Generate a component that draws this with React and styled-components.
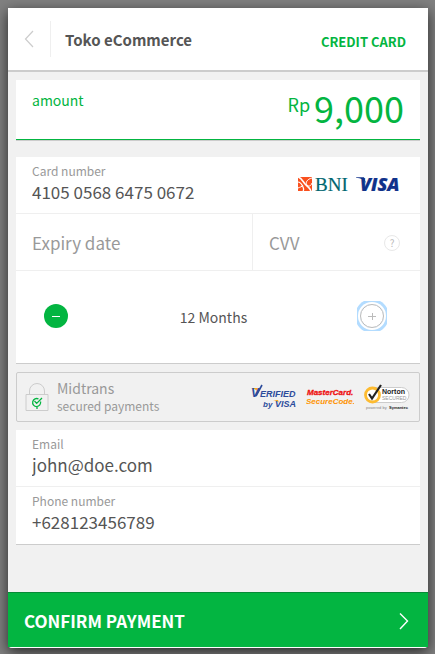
import React, { useState } from "react";
import styled, { createGlobalStyle, css } from "styled-components";

const green = "#03b541";
const line = "#cccccc";
const hairline = "#efefef";

const GlobalStyle = createGlobalStyle`
  * { box-sizing: border-box; }
  body {
    margin: 0;
    background: #808080;
    color: #555555;
    font-family: "Noto Sans CJK SC", "Noto Sans", sans-serif;
  }
  button, input { font: inherit; color: inherit; }
  button { padding: 0; border: 0; background: none; cursor: pointer; }
`;

const Page = styled.div`
  display: flex;
  min-height: 100vh;
  padding: 8px 7px 6px 8px;
`;

const Dialog = styled.form`
  display: flex;
  flex: 1;
  flex-direction: column;
  min-width: 0;
  background: #f1f1f1;
  border-bottom: 1px solid #ffffff;
  border-radius: 0 0 4px 4px;
  box-shadow: 0 4px 14px rgba(0, 0, 0, 0.7);
`;

const Header = styled.header`
  display: flex;
  align-items: center;
  height: 64px;
  padding-right: 22px;
  background: #ffffff;
  border-bottom: 2px solid ${line};
`;

const BackButton = styled.button`
  display: flex;
  align-items: center;
  justify-content: center;
  width: 43px;
  height: 36px;
  border-right: 1px solid ${hairline};
`;

const Title = styled.h1`
  flex: 1;
  margin: 0;
  padding: 2px 0 0 14px;
  font-size: 15px;
  line-height: 24px;
  font-weight: 700;
`;

const Method = styled.span`
  padding-top: 6px;
  color: ${green};
  font-size: 13px;
  line-height: 20px;
  font-weight: 700;
`;

const Content = styled.main`
  display: flex;
  flex: 1;
  flex-direction: column;
  padding: 8px 8px 47px;
`;

const Panel = styled.section`
  background: #ffffff;
  border-bottom: 1px solid ${line};
`;

const AmountPanel = styled(Panel)`
  display: flex;
  justify-content: space-between;
  height: 61px;
  margin-bottom: 16px;
  padding: 0 16px;
  box-shadow: inset 0 -1px 0 ${green};
  color: ${green};
`;

const AmountLabel = styled.span`
  padding-top: 10px;
  font-size: 14px;
  line-height: 20px;
`;

const Amount = styled.span`
  display: flex;
  gap: 4px;
`;

const Currency = styled.span`
  padding-top: 12px;
  font-size: 18px;
  line-height: 24px;
`;

const Total = styled.span`
  padding-top: 7px;
  font-size: 36px;
  line-height: 40px;
`;

const Row = styled.div`
  display: flex;
  align-items: center;
  height: 57px;
  padding-right: 20px;
  border-bottom: 1px solid ${(p) => (p.$last ? "transparent" : hairline)};
`;

const SplitRow = styled.div`
  display: grid;
  grid-template-columns: 237fr 167fr;
`;

const SplitCell = styled(Row)`
  padding-top: 2px;
  border-right: ${(p) => (p.$divided ? `1px solid ${hairline}` : "0")};
`;

const Field = styled.label`
  display: flex;
  flex: 1;
  flex-direction: column;
  min-width: 0;
  padding: 0 0 5px 16px;
`;

const FieldLabel = styled.span`
  color: #999999;
  font-size: 12px;
  line-height: 19px;
`;

const Input = styled.input`
  width: 100%;
  height: 24px;
  padding: 0;
  border: 0;
  outline: 0;
  background: none;
  font-size: 17px;
  line-height: 24px;
  &::placeholder {
    color: #999999;
    opacity: 1;
  }
`;

const BareField = styled(Field)`
  padding-bottom: 0;
`;

const CardLogos = styled.div`
  display: flex;
  align-items: center;
  gap: 4px;
`;

const HelpButton = styled.button`
  width: 16px;
  height: 16px;
  border: 1px solid #e8e8e8;
  border-radius: 50%;
  color: #bbbbbb;
  font-size: 10px;
  line-height: 12px;
`;

const Stepper = styled.div`
  display: flex;
  align-items: center;
  height: 92px;
  padding: 0 33px 2px 28px;
`;

const StepValue = styled.output`
  flex: 1;
  padding: 1px 0 0 2px;
  font-size: 14px;
  line-height: 20px;
  text-align: center;
`;

const FocusArea = styled.span`
  display: flex;
  align-items: center;
  justify-content: center;
  width: 30px;
  height: 30px;
  overflow: hidden;
`;

const StepButton = styled.button`
  display: flex;
  align-items: center;
  justify-content: center;
  width: 24px;
  height: 24px;
  border-radius: 50%;
  outline: 0;
  ${(p) =>
    p.$active
      ? css`
          background: ${green};
          color: #ffffff;
        `
      : css`
          border: 1px solid #bbbbbb;
          color: #bbbbbb;
          box-shadow: 0 0 0 2px #ffffff, 0 0 0 5px #b3dcff;
        `}
`;

const Security = styled.aside`
  display: flex;
  align-items: center;
  height: 50px;
  margin: 8px 0;
  padding: 0 9px 0 8px;
  border: 1px solid ${line};
  border-radius: 2px;
  color: #999999;
`;

const SecurityText = styled.div`
  display: flex;
  flex: 1;
  flex-direction: column;
  padding-left: 8px;
`;

const SecurityName = styled.span`
  font-size: 14px;
  line-height: 17px;
`;

const SecurityNote = styled.span`
  font-size: 12px;
  line-height: 17px;
`;

const Seals = styled.div`
  display: flex;
  align-items: center;
  gap: 8px;
`;

const ConfirmButton = styled.button`
  display: flex;
  align-items: center;
  justify-content: space-between;
  height: 55px;
  padding: 2px 19px 0 16px;
  border-top: 1px solid #078a36;
  background: ${green};
  color: #ffffff;
  font-size: 17px;
  line-height: 24px;
  font-weight: 700;
`;

function Chevron({ left }) {
  return (
    <svg width="10" height="18" viewBox="0 0 10 18" fill="none" stroke={left ? "#cccccc" : "#ffffff"} strokeWidth={left ? 1.2 : 1.4} aria-hidden="true">
      <path d={left ? "M9 1 1.5 9 9 17" : "M1 1.5 8.5 9 1 17"} />
    </svg>
  );
}

function BniLogo() {
  return (
    <svg width="52" height="28" viewBox="0 0 52 28" role="img" aria-label="BNI">
      <path fill="#f9501e" d="M0 6h14v14H0z" />
      <g fill="none" stroke="#ffffff">
        <path strokeWidth="1.6" d="M0 6c4 1 5 5 8 8 2 2 4 3 5 6" />
        <path strokeWidth="1.2" d="M0 11c3 0 4 3 5 5 1 2 1 3 0 4" />
        <path strokeWidth="1" d="M14 7c-5 1-7 5-5 7s4 1 5-2M0 17c2-1 4-1 5-3" />
      </g>
      <text x="17" y="20" fill="#006670" stroke="#006670" strokeWidth=".2" fontFamily="Liberation Serif, serif" fontSize="19">BNI</text>
    </svg>
  );
}

function VisaLogo() {
  return (
    <svg width="46" height="28" viewBox="0 0 46 28" role="img" aria-label="VISA">
      <path fill="#10328a" d="M2 6.200h8l2 6C10 8.400 7 7.200 2 6.700z" />
      <text x="6" y="20" fill="#10328a" stroke="#10328a" strokeWidth=".2" fontFamily="Open Sans, sans-serif" fontStyle="italic" fontWeight="800" fontSize="18">VISA</text>
    </svg>
  );
}

function LockIcon() {
  return (
    <svg width="24" height="32" viewBox="0 0 24 32" fill="none" aria-hidden="true">
      <path stroke="#cccccc" d="M4.500 13.500V10a7.500 7.500 0 0 1 15 0v3.500M1 13.500h22v16H1z" />
      <path stroke={green} strokeWidth="1.300" d="M15.500 20.500a4 4 0 1 1-2-2.500M9.500 20l2.200 2.400L17 17M12 25v3" />
    </svg>
  );
}

function VerifiedByVisa() {
  return (
    <svg width="48" height="30" viewBox="0 0 48 30" role="img" aria-label="Verified by VISA">
      <path fill="#f7a823" d="M1 6h7l1 5C7 8 5 7 1 6zM23 18h5l1 3c-1-2-3-2-6-3z" />
      <g fill="#2b4b9b" fontFamily="Liberation Sans, sans-serif" fontStyle="italic" fontWeight="700">
        <text x="1" y="15" fontSize="12">V</text>
        <text x="10" y="15" fontSize="9">ERIFIED</text>
        <text x="13" y="25" fontSize="8">by</text>
        <text x="25" y="25" fontSize="9">VISA</text>
      </g>
      <path stroke="#2b4b9b" strokeWidth="1.600" d="m6 14 6-11" />
    </svg>
  );
}

function SecureCode() {
  return (
    <svg width="48" height="26" viewBox="0 0 48 26" role="img" aria-label="MasterCard SecureCode">
      <g fontFamily="Liberation Sans, sans-serif" fontStyle="italic" fontWeight="700" fontSize="8">
        <text x="1" y="11" fill="#ee1111" stroke="#ee1111" strokeWidth=".3">MasterCard.</text>
        <text x="0" y="20" fill="#ff9300">SecureCode.</text>
      </g>
    </svg>
  );
}

function NortonSeal() {
  return (
    <svg width="48" height="30" viewBox="0 0 48 30" role="img" aria-label="Norton Secured, powered by Symantec">
      <rect x="4" y="5.500" width="43" height="15" rx="7.500" fill="#ffffff" stroke="#cccccc" />
      <circle cx="10.500" cy="13" r="7" fill="#ffffff" stroke="#fdbb30" strokeWidth="2.800" />
      <path d="m7 12 3 4.500L19 3" fill="none" stroke="#222222" strokeWidth="2.200" />
      <g fontFamily="Liberation Sans, sans-serif">
        <text x="20" y="12" fill="#222222" fontWeight="700" fontSize="7">Norton</text>
        <text x="20" y="18" fill="#999999" fontSize="5">SECURED</text>
        <text x="4" y="27" fill="#888888" fontSize="4">powered by</text>
        <text x="27" y="27" fill="#222222" fontWeight="700" fontSize="4">Symantec</text>
      </g>
    </svg>
  );
}

function StepSign({ plus }) {
  return (
    <svg width="8" height="8" viewBox="0 0 8 8" stroke="currentColor" aria-hidden="true">
      <path d={plus ? "M0 4.500h8M4.500 1v7" : "M0 4.500h8"} />
    </svg>
  );
}

function LabelledField({ label, ...input }) {
  return (
    <Field>
      <FieldLabel>{label}</FieldLabel>
      <Input {...input} />
    </Field>
  );
}

export default function App() {
  const [months, setMonths] = useState(12);
  return (
    <Page>
      <GlobalStyle />
      <Dialog onSubmit={(e) => e.preventDefault()}>
        <Header>
          <BackButton type="button" aria-label="Back">
            <Chevron left />
          </BackButton>
          <Title>Toko eCommerce</Title>
          <Method>CREDIT CARD</Method>
        </Header>
        <Content>
          <AmountPanel>
            <AmountLabel>amount</AmountLabel>
            <Amount>
              <Currency>Rp</Currency>
              <Total>9,000</Total>
            </Amount>
          </AmountPanel>
          <Panel>
            <Row>
              <LabelledField label="Card number" defaultValue="4105 0568 6475 0672" inputMode="numeric" />
              <CardLogos>
                <BniLogo />
                <VisaLogo />
              </CardLogos>
            </Row>
            <SplitRow>
              <SplitCell $divided>
                <BareField>
                  <Input placeholder="Expiry date" aria-label="Expiry date" />
                </BareField>
              </SplitCell>
              <SplitCell>
                <BareField>
                  <Input placeholder="CVV" aria-label="CVV" />
                </BareField>
                <HelpButton type="button" aria-label="About CVV">?</HelpButton>
              </SplitCell>
            </SplitRow>
            <Stepper>
              <StepButton type="button" $active aria-label="Fewer months" onClick={() => setMonths(Math.max(3, months - 3))}>
                <StepSign />
              </StepButton>
              <StepValue>{months} Months</StepValue>
              <FocusArea>
                <StepButton type="button" aria-label="More months" onClick={() => setMonths(Math.min(12, months + 3))}>
                  <StepSign plus />
                </StepButton>
              </FocusArea>
            </Stepper>
          </Panel>
          <Security>
            <LockIcon />
            <SecurityText>
              <SecurityName>Midtrans</SecurityName>
              <SecurityNote>secured payments</SecurityNote>
            </SecurityText>
            <Seals>
              <VerifiedByVisa />
              <SecureCode />
              <NortonSeal />
            </Seals>
          </Security>
          <Panel>
            <Row>
              <LabelledField label="Email" type="email" defaultValue="john@doe.com" />
            </Row>
            <Row $last>
              <LabelledField label="Phone number" type="tel" defaultValue="+628123456789" />
            </Row>
          </Panel>
        </Content>
        <ConfirmButton type="submit">
          CONFIRM PAYMENT
          <Chevron />
        </ConfirmButton>
      </Dialog>
    </Page>
  );
}
